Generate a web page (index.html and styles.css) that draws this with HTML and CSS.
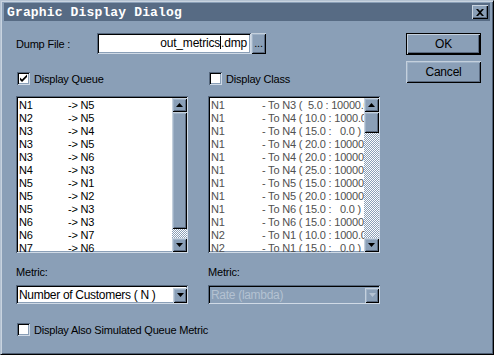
FILE: index.html
```html
<!DOCTYPE html>
<html lang="en">
<head>
    <meta charset="UTF-8">
    <link rel="stylesheet" href="styles.css">
    <title>Graphic Display Dialog</title>
</head>
<body>
    <div class="dialog">
        <div class="titlebar">
            <span class="title">Graphic Display Dialog</span>
            <span class="close-btn">
                <svg width="8" height="7" viewBox="0 0 8 7"><path d="M0 0h2l2 2 2-2h2L5 3.5 8 7H6L4 5 2 7H0l3-3.5z" fill="#000"/></svg>
            </span>
        </div>

        <div class="content">
            <div class="main">
                <div class="dump-row">
                    <span class="dump-label">Dump File :</span>
                    <div class="dump-field">out_metrics<span class="caret"></span>.dmp</div>
                    <div class="raised browse">...</div>
                </div>

                <div class="columns">
                    <!-- Queue column -->
                    <div class="col">
                        <div class="check-row">
                            <span class="checkbox">
                                <svg width="9" height="9" viewBox="0 0 9 9"><path d="M1 3.5l2 2 5-5v2.5l-5 5-2-2z" fill="#000"/></svg>
                            </span>
                            <span>Display Queue</span>
                        </div>
                        <div class="listbox">
                            <div class="list-items queue-items">
                                <div class="row"><span>N1</span><span>-&gt; N5</span></div>
                                <div class="row"><span>N2</span><span>-&gt; N5</span></div>
                                <div class="row"><span>N3</span><span>-&gt; N4</span></div>
                                <div class="row"><span>N3</span><span>-&gt; N5</span></div>
                                <div class="row"><span>N3</span><span>-&gt; N6</span></div>
                                <div class="row"><span>N4</span><span>-&gt; N3</span></div>
                                <div class="row"><span>N5</span><span>-&gt; N1</span></div>
                                <div class="row"><span>N5</span><span>-&gt; N2</span></div>
                                <div class="row"><span>N5</span><span>-&gt; N3</span></div>
                                <div class="row"><span>N6</span><span>-&gt; N3</span></div>
                                <div class="row"><span>N6</span><span>-&gt; N7</span></div>
                                <div class="row"><span>N7</span><span>-&gt; N6</span></div>
                            </div>
                            <div class="scrollbar">
                                <div class="raised arrow"><svg width="7" height="4" viewBox="0 0 7 4"><path d="M3.5 0L7 4H0z" fill="#000"/></svg></div>
                                <div class="raised thumb queue-thumb"></div>
                                <div class="track"></div>
                                <div class="raised arrow"><svg width="7" height="4" viewBox="0 0 7 4"><path d="M0 0h7L3.5 4z" fill="#000"/></svg></div>
                            </div>
                        </div>
                        <div class="metric-label">Metric:</div>
                        <div class="combo">
                            <span class="combo-text">Number of Customers ( N )</span>
                            <div class="raised combo-btn"><svg width="7" height="4" viewBox="0 0 7 4"><path d="M0 0h7L3.5 4z" fill="#000"/></svg></div>
                        </div>
                    </div>

                    <!-- Class column -->
                    <div class="col">
                        <div class="check-row">
                            <span class="checkbox"></span>
                            <span>Display Class</span>
                        </div>
                        <div class="listbox disabled">
                            <div class="list-items class-items">
                                <div class="row"><span>N1</span><span>- To N3 (  5.0 : 10000.0 )</span></div>
                                <div class="row"><span>N1</span><span>- To N4 ( 10.0 : 1000.0 )</span></div>
                                <div class="row"><span>N1</span><span>- To N4 ( 15.0 :   0.0 )</span></div>
                                <div class="row"><span>N1</span><span>- To N4 ( 20.0 : 10000.0 )</span></div>
                                <div class="row"><span>N1</span><span>- To N4 ( 20.0 : 10000.0 )</span></div>
                                <div class="row"><span>N1</span><span>- To N4 ( 25.0 : 10000.0 )</span></div>
                                <div class="row"><span>N1</span><span>- To N5 ( 15.0 : 10000.0 )</span></div>
                                <div class="row"><span>N1</span><span>- To N5 ( 20.0 : 10000.0 )</span></div>
                                <div class="row"><span>N1</span><span>- To N6 ( 15.0 :   0.0 )</span></div>
                                <div class="row"><span>N1</span><span>- To N6 ( 15.0 : 10000.0 )</span></div>
                                <div class="row"><span>N2</span><span>- To N1 ( 10.0 : 1000.0 )</span></div>
                                <div class="row"><span>N2</span><span>- To N1 ( 15.0 :   0.0 )</span></div>
                            </div>
                            <div class="scrollbar">
                                <div class="raised arrow"><svg width="7" height="4" viewBox="0 0 7 4"><path d="M3.5 0L7 4H0z" fill="#000"/></svg></div>
                                <div class="raised thumb class-thumb"></div>
                                <div class="track"></div>
                                <div class="raised arrow"><svg width="7" height="4" viewBox="0 0 7 4"><path d="M0 0h7L3.5 4z" fill="#000"/></svg></div>
                            </div>
                        </div>
                        <div class="metric-label">Metric:</div>
                        <div class="combo disabled">
                            <span class="combo-text">Rate (lambda)</span>
                            <div class="raised combo-btn"><svg width="7" height="4" viewBox="0 0 7 4"><path d="M0 0h7L3.5 4z" fill="#b4c2d2"/></svg></div>
                        </div>
                    </div>
                </div>

                <div class="check-row sim-row">
                    <span class="checkbox"></span>
                    <span>Display Also Simulated Queue Metric</span>
                </div>
            </div>

            <div class="buttons">
                <div class="raised btn default">OK</div>
                <div class="raised btn">Cancel</div>
            </div>
        </div>
    </div>
</body>
</html>
```

FILE: styles.css
```css
body {
    margin: 0;
    font-family: 'Liberation Sans', Arial, sans-serif;
    font-size: 11px;
    letter-spacing: -0.2px;
    color: #000;
}

.dialog {
    width: 494px;
    height: 355px;
    box-sizing: border-box;
    background-color: #8a9fb7;
    border-top: 1px solid #b4c2d2;
    border-left: 1px solid #b4c2d2;
    border-right: 1px solid #000;
    border-bottom: 1px solid #000;
    box-shadow: inset 1px 1px #c9d4e0, inset -1px -1px #4f5f74;
    padding: 2px 3px 0 3px;
    overflow: hidden;
}

.titlebar {
    height: 18px;
    background-color: #576b84;
    display: flex;
    align-items: center;
    justify-content: space-between;
    padding: 0 2px 0 3px;
}

.title {
    font-family: 'Liberation Mono', 'DejaVu Sans Mono', monospace;
    font-weight: bold;
    font-size: 13px;
    letter-spacing: 0.15px;
    color: #fff;
}

.close-btn {
    width: 16px;
    height: 14px;
    box-sizing: border-box;
    background-color: #8a9fb7;
    box-shadow: inset 1px 1px #c9d4e0, inset -1px -1px #000, inset -2px -2px #5a6a80;
    display: flex;
    align-items: center;
    justify-content: center;
}

.content {
    display: flex;
    padding: 12px 0 0 12px;
}

.main {
    width: 364px;
}

/* raised 3d face */
.raised {
    background-color: #8a9fb7;
    box-sizing: border-box;
    box-shadow: inset 1px 1px #c4d0dd, inset -1px -1px #000, inset 2px 2px #9fb2c7, inset -2px -2px #5a6a80;
}

.dump-row {
    display: flex;
    align-items: center;
    height: 21px;
}

.dump-label {
    width: 81px;
}

.dump-field {
    width: 154px;
    height: 21px;
    box-sizing: border-box;
    background: #fff;
    box-shadow: inset 1px 1px #55677d, inset -1px -1px #d0dae6, inset 2px 2px #000, inset -2px -2px #8a9fb7;
    text-align: right;
    line-height: 21px;
    padding-right: 4px;
    font-size: 12px;
}

.caret {
    display: inline-block;
    width: 1px;
    height: 13px;
    background: #000;
    vertical-align: -2px;
}

.browse {
    width: 15px;
    height: 21px;
    text-align: center;
    line-height: 21px;
}

.columns {
    display: flex;
    gap: 20px;
    margin-top: 18px;
}

.col {
    width: 172px;
}

.check-row {
    display: flex;
    align-items: center;
    height: 13px;
    gap: 4px;
    padding-left: 1px;
}

.checkbox {
    width: 13px;
    height: 13px;
    box-sizing: border-box;
    background: #fff;
    box-shadow: inset 1px 1px #55677d, inset -1px -1px #d0dae6, inset 2px 2px #000, inset -2px -2px #8a9fb7;
    display: flex;
    align-items: center;
    justify-content: center;
}

.listbox {
    margin-top: 11px;
    height: 157px;
    display: flex;
    box-sizing: border-box;
    background: #fff;
    padding: 2px 1px 1px 2px;
    box-shadow: inset 1px 1px #55677d, inset -1px -1px #d0dae6, inset 2px 2px #000, inset -2px -2px #8a9fb7;
}

.list-items {
    flex: 1;
    overflow: hidden;
    padding-left: 1px;
    padding-top: 1px;
}

.row {
    display: flex;
    height: 13px;
    line-height: 13px;
    white-space: pre;
}

.row span:first-child {
    width: 49px;
    flex-shrink: 0;
}

.class-items .row span:first-child {
    width: 51px;
}

.disabled .list-items {
    color: #505050;
}

.scrollbar {
    width: 15px;
    display: flex;
    flex-direction: column;
}

.arrow {
    height: 14px;
    display: flex;
    align-items: center;
    justify-content: center;
}

.thumb {
    flex-shrink: 0;
}

.queue-thumb {
    height: 117px;
}

.class-thumb {
    height: 21px;
}

.track {
    flex: 1;
    background: repeating-conic-gradient(#fff 0 25%, #8a9fb7 0 50%) 0 0 / 2px 2px;
}

.metric-label {
    margin-top: 13px;
    height: 13px;
    line-height: 13px;
}

.combo {
    margin-top: 6px;
    height: 19px;
    box-sizing: border-box;
    background: #fff;
    display: flex;
    align-items: center;
    padding: 2px 1px 1px 3px;
    box-shadow: inset 1px 1px #55677d, inset -1px -1px #d0dae6, inset 2px 2px #000, inset -2px -2px #8a9fb7;
}

.combo-text {
    flex: 1;
    font-size: 12px;
    letter-spacing: -0.3px;
}

.combo.disabled {
    background: #8a9fb7;
}

.combo.disabled .combo-text {
    color: #b4c2d2;
}

.combo-btn {
    width: 14px;
    height: 15px;
    display: flex;
    align-items: center;
    justify-content: center;
}

.sim-row {
    margin-top: 19px;
}

.buttons {
    margin-left: 26px;
    display: flex;
    flex-direction: column;
    gap: 6px;
}

.btn {
    width: 75px;
    height: 22px;
    text-align: center;
    line-height: 22px;
    font-size: 12px;
}

.btn.default {
    box-shadow: inset 0 0 0 1px #000, inset 2px 2px #c4d0dd, inset -2px -2px #000, inset -3px -3px #5a6a80;
}
```
